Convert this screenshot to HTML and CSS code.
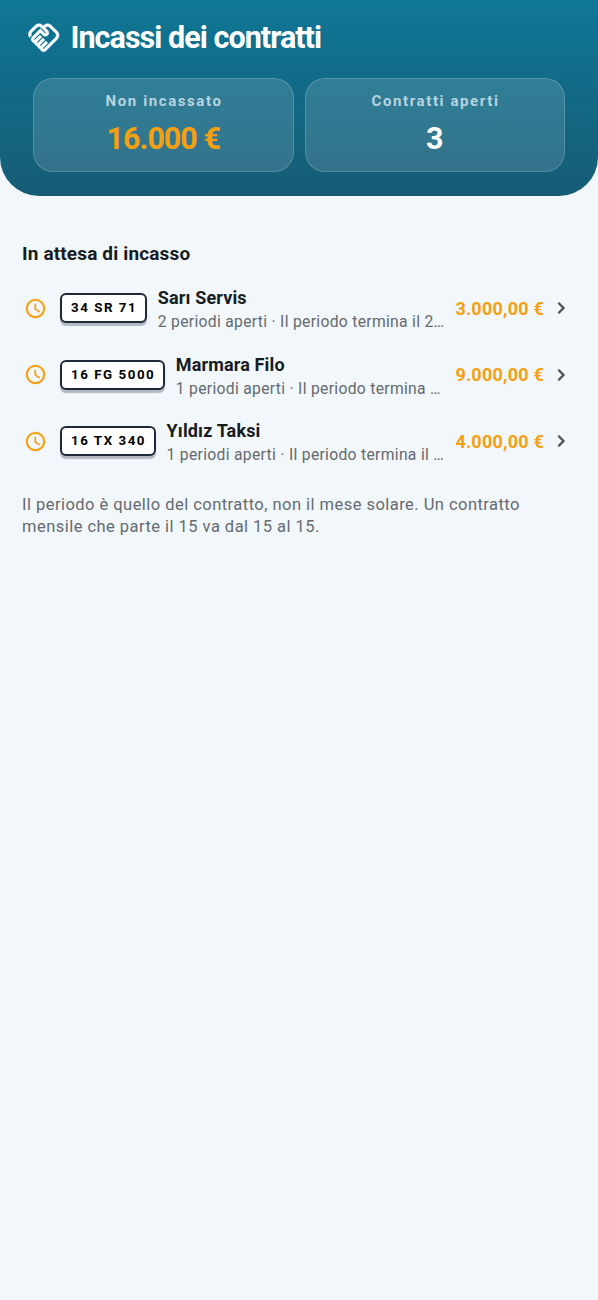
FILE: index.html
```html
<!DOCTYPE html>
<html lang="it">
<head>
<meta charset="utf-8">
<title>Incassi dei contratti</title>
<link rel="stylesheet" href="styles.css">
</head>
<body>
<svg class="defs" aria-hidden="true">
  <symbol id="clock" viewBox="0 0 24 24"><path d="M11.99 2C6.47 2 2 6.48 2 12s4.47 10 9.99 10C17.52 22 22 17.52 22 12S17.52 2 11.99 2zM12 20c-4.42 0-8-3.58-8-8s3.58-8 8-8 8 3.580 8 8-3.580 8-8 8zm-.22-13h-.06c-.4 0-.72.32-.72.72v4.720c0 .35.18.68.49.86l4.150 2.490c.34.2.78.1.98-.24.21-.34.1-.79-.25-.99l-3.870-2.300V7.720c0-.4-.32-.72-.72-.72z"/></symbol>
  <symbol id="chevron" viewBox="0 0 24 24"><path d="M9.290 6.710c-.39.39-.39 1.020 0 1.410L13.170 12l-3.880 3.880c-.39.39-.39 1.020 0 1.410.39.39 1.020.39 1.410 0l4.590-4.590c.39-.39.39-1.020 0-1.410L10.700 6.700c-.38-.38-1.020-.38-1.410.01z"/></symbol>
</svg>
<header class="header">
  <div class="heading">
    <svg class="handshake" viewBox="0 0 24 24"><path d="M12.22,19.85c-0.18,0.18-0.5,0.21-0.71,0c-0.18-0.18-0.21-0.5,0-0.71l3.39-3.39l-1.41-1.41l-3.39,3.39c-0.19,0.2-0.51,0.19-0.71,0c-0.21-0.21-0.18-0.53,0-0.71l3.39-3.39l-1.41-1.41l-3.39,3.39c-0.18,0.18-0.5,0.21-0.71,0c-0.19-0.19-0.19-0.51,0-0.71l3.39-3.39L9.24,10.1l-3.38,3.39c-0.18,0.18-0.5,0.21-0.71,0c-0.19-0.2-0.19-0.51,0-0.71L9.52,8.4l1.87,1.86c0.95,0.95,2.59,0.94,3.54,0c0.98-0.98,0.98-2.56,0-3.54l-1.86-1.86l0.28-0.28c0.78-0.78,2.05-0.78,2.83,0l4.24,4.24c0.78,0.78,0.78,2.05,0,2.83L12.22,19.85z M21.83,13.07c1.56-1.56,1.56-4.09,0-5.66l-4.24-4.24c-1.56-1.56-4.09-1.56-5.66,0l-0.28,0.28l-0.28-0.28c-1.56-1.56-4.09-1.56-5.66,0L2.17,6.71c-1.42,1.42-1.55,3.63-0.4,5.19l1.45-1.45c-0.39-0.75-0.26-1.7,0.37-2.33l3.54-3.54c0.78-0.78,2.05-0.78,2.83,0l3.56,3.56c0.18,0.18,0.21,0.5,0,0.71c-0.21,0.21-0.53,0.18-0.71,0L9.52,5.57l-5.8,5.79c-0.98,0.97-0.98,2.56,0,3.54c0.39,0.39,0.89,0.63,1.42,0.7c0.07,0.52,0.3,1.02,0.7,1.42c0.4,0.4,0.9,0.63,1.42,0.7c0.07,0.52,0.3,1.02,0.7,1.42c0.4,0.4,0.9,0.63,1.42,0.7c0.07,0.54,0.31,1.03,0.7,1.42c0.47,0.47,1.1,0.73,1.77,0.73c0.67,0,1.3-0.26,1.77-0.73L21.83,13.07z"/></svg>
    <h1 class="title">Incassi dei contratti</h1>
  </div>
  <div class="stats">
    <div class="stat"><div class="stat-label">Non incassato</div><div class="stat-value amber">16.000 €</div></div>
    <div class="stat"><div class="stat-label">Contratti aperti</div><div class="stat-value">3</div></div>
  </div>
</header>
<main class="content">
  <h2 class="section">In attesa di incasso</h2>
  <ul class="list">
    <li class="row">
      <svg class="clock"><use href="#clock"/></svg>
      <span class="plate">34 SR 71</span>
      <div class="info"><div class="name">Sarı Servis</div><div class="detail">2 periodi aperti · Il periodo termina il 2…</div></div>
      <span class="amount">3.000,00 €</span>
      <svg class="chevron"><use href="#chevron"/></svg>
    </li>
    <li class="row">
      <svg class="clock"><use href="#clock"/></svg>
      <span class="plate">16 FG 5000</span>
      <div class="info"><div class="name">Marmara Filo</div><div class="detail">1 periodi aperti · Il periodo termina …</div></div>
      <span class="amount">9.000,00 €</span>
      <svg class="chevron"><use href="#chevron"/></svg>
    </li>
    <li class="row">
      <svg class="clock"><use href="#clock"/></svg>
      <span class="plate">16 TX 340</span>
      <div class="info"><div class="name">Yıldız Taksi</div><div class="detail">1 periodi aperti · Il periodo termina il …</div></div>
      <span class="amount">4.000,00 €</span>
      <svg class="chevron"><use href="#chevron"/></svg>
    </li>
  </ul>
  <p class="note">Il periodo è quello del contratto, non il mese solare. Un contratto mensile che parte il 15 va dal 15 al 15.</p>
</main>
</body>
</html>
```
FILE: styles.css
```css
* { box-sizing: border-box; margin: 0; padding: 0; }
body { min-height: 1300px; background: #f1f7fb; font-family: Roboto, sans-serif; color: #171c1f; }
.defs { display: none; }
.header { height: 196px; padding: 20px 33px 0; border-radius: 0 0 39px 39px; background: linear-gradient(#0e7795, #165b75); }
.heading { display: flex; align-items: center; gap: 10px; height: 36px; margin-left: -6px; }
.handshake { width: 33.500px; height: 33.500px; fill: #fff; stroke: #fff; stroke-width: .3; }
.title { font-size: 30.500px; line-height: 36px; font-weight: 700; letter-spacing: -0.960px; color: #fff; white-space: nowrap; }
.stats { display: grid; grid-template-columns: 1fr 1fr; gap: 11px; margin-top: 22px; }
.stat { height: 93.500px; padding-top: 12px; text-align: center; border: 1px solid rgba(255,255,255,.18); border-radius: 20px; background: rgba(255,255,255,.13); }
.stat-label { padding-left: 1.600px; font-size: 15px; line-height: 20px; font-weight: 700; letter-spacing: 1.600px; color: #b6d4e0; }
.stat-value { margin-top: 9.500px; font-size: 30.500px; line-height: 36px; font-weight: 700; color: #fff; }
.stat-value.amber { color: #f5a013; letter-spacing: -1px; }
.content { padding: 45px 22px 0; }
.section { font-size: 19px; line-height: 25px; font-weight: 700; letter-spacing: .15px; }
.list { list-style: none; margin-top: 9px; }
.row { display: flex; align-items: center; height: 66.500px; padding: 0 3px 0 2px; }
.clock { width: 23px; height: 23px; margin-right: 13px; fill: #f5a013; stroke: #f5a013; stroke-width: .3; flex: none; }
.plate { flex: none; height: 30px; padding: 0 7.500px 0 9px; border: 2px solid #1e293b; border-radius: 6px; background: #fff; box-shadow: 0 3px 1px rgba(30,41,59,.3); font-size: 13.300px; line-height: 26px; font-weight: 700; letter-spacing: 1.550px; color: #000; }
.info { flex: 1; min-width: 0; margin: 2.500px 0 0 11px; }
.name { font-size: 18px; line-height: 24px; font-weight: 700; letter-spacing: .15px; }
.detail { font-size: 15.700px; line-height: 23px; letter-spacing: .3px; color: #666a6d; white-space: nowrap; }
.amount { font-size: 18px; font-weight: 700; letter-spacing: .22px; color: #f5a013; white-space: nowrap; }
.chevron { width: 24px; height: 24px; margin-left: 5px; fill: #50565a; stroke: #50565a; stroke-width: .5; flex: none; }
.note { margin-top: 19px; font-size: 16.500px; line-height: 22px; letter-spacing: .46px; color: #666a6d; }
```
